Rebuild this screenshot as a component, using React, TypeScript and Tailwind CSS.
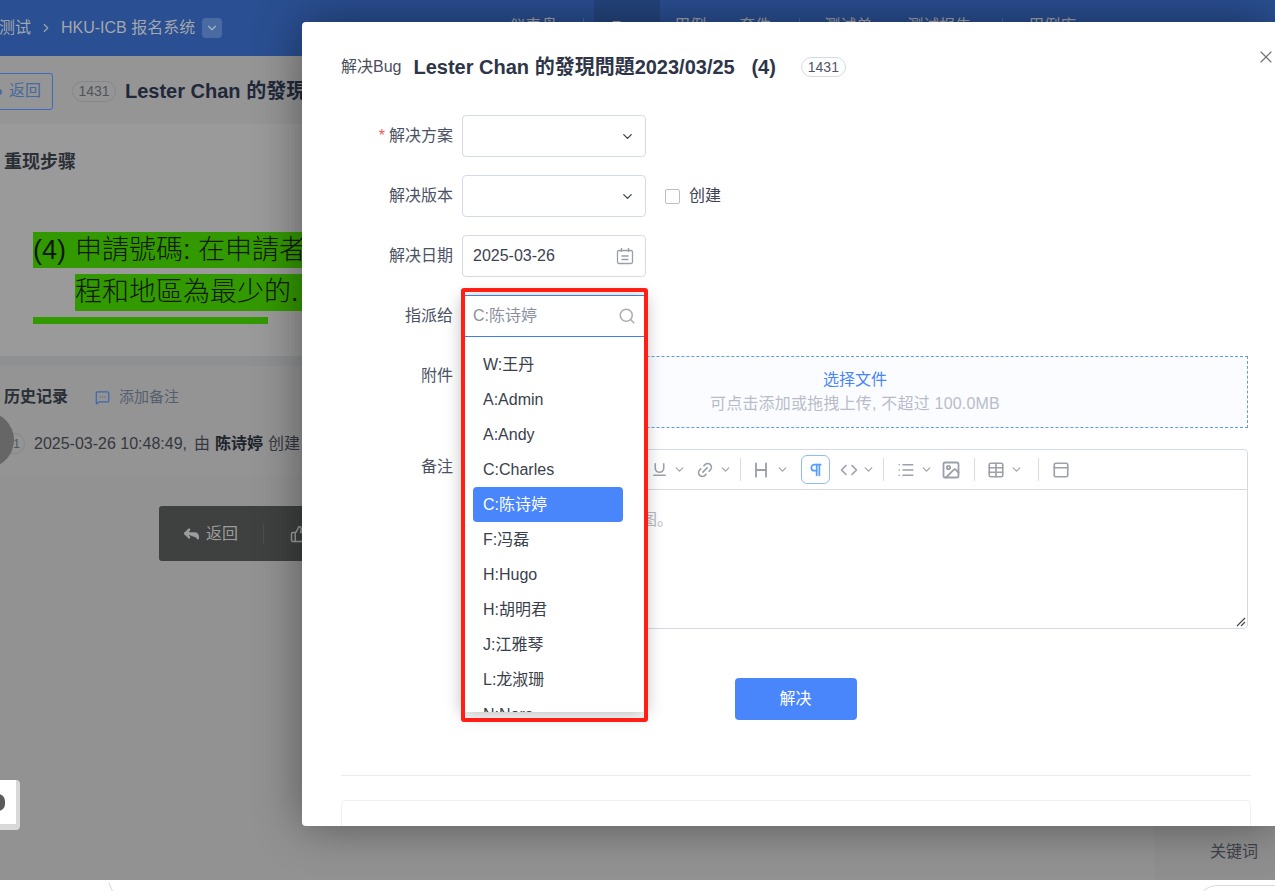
import { ReactNode } from 'react';
import {
  ChevronDown,
  ChevronRight,
  Code,
  Heading,
  Image,
  Link2,
  List,
  MessageSquareMore,
  PanelTop,
  Pilcrow,
  Reply,
  Search,
  Table,
  ThumbsUp,
  Underline,
  X,
} from 'lucide-react';

const users = ['W:王丹', 'A:Admin', 'A:Andy', 'C:Charles', 'C:陈诗婷', 'F:冯磊', 'H:Hugo', 'H:胡明君', 'J:江雅琴', 'L:龙淑珊', 'N:Nora'];

function Field({ label, required, labelClass, children }: { label: string; required?: boolean; labelClass?: string; children: ReactNode }) {
  return (
    <div className="flex">
      <div className={`w-[112px] h-[42px] shrink-0 flex items-center justify-end text-[#4b5263] ${labelClass ?? ''}`}>
        {required && <span className="text-[#f05a5a] mr-[4px]">*</span>}
        {label}
      </div>
      <div className="ml-[9px] flex-1 min-w-0">{children}</div>
    </div>
  );
}

function SelectBox() {
  return (
    <div className="w-[184px] h-[42px] border border-[#d6d9e8] rounded flex items-center justify-end pr-[10px]">
      <ChevronDown size={15} className="text-[#3c4150]" />
    </div>
  );
}

function Chev({ className }: { className: string }) {
  return <ChevronDown size={13} strokeWidth={2.4} className={`text-[#a3a6b0] shrink-0 ${className}`} />;
}

function Sep({ className }: { className: string }) {
  return <div className={`w-px h-[23px] bg-[#dcdde2] shrink-0 ${className}`} />;
}

function Toolbar() {
  const icon = 'text-[#9ca0ab] shrink-0';
  return (
    <div className="h-10 border-b border-[#d8d9e0] flex items-center">
      <Underline size={17} strokeWidth={2.2} className={`${icon} ml-[188px]`} />
      <Chev className="ml-[5px]" />
      <Link2 size={18} strokeWidth={2.2} className={`${icon} ml-[10px] -rotate-45`} />
      <Chev className="ml-[5px]" />
      <Sep className="ml-[8px]" />
      <Heading size={20} strokeWidth={2.2} className={`${icon} ml-[10px]`} />
      <Chev className="ml-[5px]" />
      <div className="ml-[12px] w-[29px] h-[29px] rounded-md border border-[#8fbdfa] flex items-center justify-center shrink-0">
        <Pilcrow size={16} strokeWidth={2.6} className="text-[#5c9dfb]" />
      </div>
      <Code size={18} strokeWidth={2.2} className={`${icon} ml-[10px]`} />
      <Chev className="ml-[4px]" />
      <Sep className="ml-[8px]" />
      <List size={18} strokeWidth={2.2} className={`${icon} ml-[13px]`} />
      <Chev className="ml-[5px]" />
      <Image size={20} strokeWidth={2.2} className={`${icon} ml-[8px]`} />
      <Sep className="ml-[13px]" />
      <Table size={18} strokeWidth={2.2} className={`${icon} ml-[12px]`} />
      <Chev className="ml-[5px]" />
      <Sep className="ml-[15px]" />
      <PanelTop size={18} strokeWidth={2.2} className={`${icon} ml-[13px]`} />
    </div>
  );
}

function AssignDropdown() {
  return (
    <>
      <div className="absolute left-0 top-0 w-[184px] h-[417px] bg-white overflow-hidden shadow-[0_2px_16px_rgba(0,0,0,0.28)] z-10">
        <div className="h-[42px] border-y border-[#3f7de8] flex items-center justify-between pl-[11px] pr-[9px] text-[#8a90a0]">
          <span>C:陈诗婷</span>
          <Search size={18} className="text-[#a9adb5] mr-[1px]" />
        </div>
        <div className="pt-[10px] pl-[11px]">
          {users.map(user => (
            <div
              key={user}
              className={
                user === 'C:陈诗婷'
                  ? 'w-[150px] h-[35px] pl-[10px] flex items-center rounded-sm bg-[#4a86fb] text-white'
                  : 'w-[150px] h-[35px] pl-[10px] flex items-center text-[#3a3f4c]'
              }
            >
              {user}
            </div>
          ))}
        </div>
      </div>
      <div className="absolute -left-[1px] -top-[7px] w-[187px] h-[434px] border-4 border-[#ff1f14] rounded-[3px] z-20 pointer-events-none" />
    </>
  );
}

function ResolveModal() {
  return (
    <div className="absolute left-[302px] top-[22px] w-[973px] h-[804px] bg-white rounded-l-sm overflow-hidden shadow-[0_0_48px_rgba(0,0,0,0.42)] pl-[39px] pr-[24px]">
      <X size={20} strokeWidth={1.4} className="absolute -right-[1px] top-[25px] text-[#6f727a]" />
      <div className="h-[90px] flex items-center">
        <span className="text-[#4a4f5c]">解决Bug</span>
        <span className="ml-[12px] text-[20px] font-bold text-[#2e3548] font-['Liberation_Sans','Noto_Sans_CJK_TC',sans-serif] whitespace-pre">
          Lester Chan 的發現問題2023/03/25{'   '}(4)
        </span>
        <span className="ml-[25px] w-[45px] h-5 rounded-full border border-[#d6d9e8] flex items-center justify-center text-sm text-[#4f566b]">
          1431
        </span>
      </div>

      <div className="mt-[3px] pr-[3px] flex flex-col">
        <Field label="解决方案" required>
          <SelectBox />
        </Field>
        <div className="mt-[18px]">
          <Field label="解决版本">
            <div className="flex items-center">
              <SelectBox />
              <div className="ml-[19px] w-[15px] h-[15px] border border-[#b9bdd0] rounded-[2px]" />
              <span className="ml-[9px] text-[#3d4250]">创建</span>
            </div>
          </Field>
        </div>
        <div className="mt-[18px]">
          <Field label="解决日期">
            <div className="w-[184px] h-[42px] border border-[#d6d9e8] rounded flex items-center justify-between pl-[10px] pr-[11px] text-[#3d4250]">
              2025-03-26
              <svg width="18" height="18" viewBox="0 0 18 18" fill="none" stroke="#9a9ea8" strokeWidth="1.3">
                <rect x="1.5" y="3.5" width="15" height="13" rx="1.5" />
                <path d="M5.5 1v4M12.5 1v4M5.5 9h7M5.5 12.5h7" />
              </svg>
            </div>
          </Field>
        </div>
        <div className="mt-[18px]">
          <Field label="指派给">
            <div className="relative w-[184px] h-[42px]">
              <AssignDropdown />
            </div>
          </Field>
        </div>
        <div className="mt-[19px]">
          <Field label="附件" labelClass="-mt-[1px]">
            <div className="h-[72px] pt-[2px] border border-dashed border-[#5c9dfb] bg-[#fbfcff] flex flex-col items-center justify-center">
              <span className="text-[#4a86fb] leading-[22px]">选择文件</span>
              <span className="text-[#b8bcc8] leading-[26px] tracking-[0.2px]">可点击添加或拖拽上传, 不超过 100.0MB</span>
            </div>
          </Field>
        </div>
        <div className="mt-[21px]">
          <Field label="备注" labelClass="-mt-[3px]">
            <div className="relative h-[180px] border border-[#d6d9e8] rounded-sm">
              <Toolbar />
              <div className="pl-[18px] pt-[18px] text-[#b5b8c0]">您可以在编辑器直接贴图。</div>
              <svg className="absolute right-[1px] bottom-[1px]" width="10" height="10" viewBox="0 0 10 10" stroke="#444" strokeWidth="1.1">
                <path d="M9 1 1 9M9 5 5 9" />
              </svg>
            </div>
          </Field>
        </div>
      </div>

      <div className="mt-[49px] flex justify-center ml-[-1px]">
        <button className="w-[122px] h-[42px] rounded-sm bg-[#4a86fb] text-white">解决</button>
      </div>
      <div className="mt-[55px] border-t border-[#ececf0]" />
      <div className="mt-[24px] h-[60px] border border-[#f0f0f4] rounded" />
    </div>
  );
}

function BackgroundPage() {
  return (
    <div className="h-[880px] flex flex-col bg-[#929292] overflow-hidden">
      <div className="h-14 shrink-0 bg-[#2a4f92] flex items-center text-[#a3a7ae] whitespace-nowrap">
        <span className="-ml-[1px] w-[33px]">测试</span>
        <ChevronRight size={14} className="ml-[7px] text-[#9aa2b4]" />
        <span className="ml-[8px]">HKU-ICB 报名系统</span>
        <div className="ml-[7px] w-5 h-5 rounded-sm bg-[#496aa3] flex items-center justify-center">
          <ChevronDown size={14} className="text-[#a9b2c4]" />
        </div>
        <span className="ml-[287px] -mt-[4px]">仪表盘</span>
        <div className="ml-[26px] w-px h-5 bg-[#4a6aa3]" />
        <div className="ml-[10px] w-[66px] h-14 bg-[#25457f] flex items-center justify-center font-bold">Bug</div>
        <span className="ml-[14px] -mt-[4px]">用例</span>
        <span className="ml-[33px] -mt-[4px]">套件</span>
        <div className="ml-[28px] w-px h-5 bg-[#4a6aa3]" />
        <span className="ml-[24px] -mt-[4px]">测试单</span>
        <span className="ml-[35px] -mt-[4px]">测试报告</span>
        <div className="ml-[31px] w-px h-5 bg-[#4a6aa3]" />
        <span className="ml-[25px] -mt-[4px]">用例库</span>
      </div>

      <div className="h-[68px] shrink-0 bg-[#959595] flex items-center pt-[2px]">
        <div className="-ml-[12px] w-[65px] h-[37px] border border-[#3a6bc0] rounded-[3px] flex items-center justify-end pr-[11px] text-[#46699f]">
          返回
        </div>
        <span className="ml-[19px] w-[44px] h-[21px] rounded-full border border-[#85878d] flex items-center justify-center text-sm text-[#50545d]">
          1431
        </span>
        <span className="ml-[9px] text-[20px] font-bold text-[#20283a] whitespace-nowrap font-['Liberation_Sans','Noto_Sans_CJK_TC',sans-serif]">
          Lester Chan 的發現問題
        </span>
      </div>

      <div className="h-[232px] shrink-0 bg-[#9a9a9a] pl-[4px] pt-[27px] overflow-hidden">
        <div className="text-[18px] font-bold text-[#2a2e35] leading-[22px]">重现步骤</div>
        <div className="mt-[59px] -ml-[4px] pl-[33px] w-[500px] h-[92px] overflow-hidden text-[27px] font-light text-[#10180c] leading-[36px] font-['Liberation_Sans','Noto_Sans_CJK_TC',sans-serif]">
          <div className="h-[36px] bg-[#339900] whitespace-nowrap">
            (4)<span className="ml-[9px]">申請號碼: 在申請者</span>
          </div>
          <div className="mt-[6px] ml-[42px] h-[37px] bg-[#339900] whitespace-nowrap">程和地區為最少的.</div>
          <div className="mt-[6px] w-[235px] h-[36px] bg-[#339900]" />
        </div>
      </div>

      <div className="h-[10px] shrink-0 bg-[#8e9091]" />

      <div className="h-[110px] shrink-0 bg-[#949494] pl-[4px] pt-[20px]">
        <div className="flex items-center">
          <span className="font-bold text-[#2a2e35] leading-[22px]">历史记录</span>
          <MessageSquareMore size={15} className="ml-[27px] text-[#3d66ac]" />
          <span className="ml-[9px] text-[15px] text-[#555e6e]">添加备注</span>
        </div>
        <div className="mt-[23px] flex items-center whitespace-nowrap text-[#34383f]">
          <span className="w-[21px] h-[21px] rounded-full border border-[#85878d] flex items-center justify-end pr-[4px] text-xs text-[#50545d]">1</span>
          <span className="ml-[9px]">2025-03-26 10:48:49,</span>
          <span className="ml-[7px]">由</span>
          <b className="ml-[5px] text-[#20242c]">陈诗婷</b>
          <span className="ml-[5px]">创建</span>
        </div>
      </div>

      <div className="flex-1 flex">
        <div className="flex-1 pt-[30px] pl-[159px]">
          <div className="w-[300px] h-[55px] rounded-[3px] bg-[#3f4040] flex items-center text-[#9c9d9d]">
            <Reply size={19} strokeWidth={3} fill="currentColor" className="ml-[23px]" />
            <span className="ml-[5px]">返回</span>
            <div className="ml-[25px] w-px h-5 bg-[#4c4d4d]" />
            <ThumbsUp size={18} className="ml-[26px]" />
          </div>
        </div>
        <div className="w-[121px] flex flex-col justify-end items-end bg-[#8f8f8f] pb-[16px] pr-[17px] text-[#3f434c]">
          关键词
        </div>
      </div>
    </div>
  );
}

export default function App() {
  return (
    <div className="relative w-[1275px] h-[891px] overflow-hidden bg-white text-base font-['Liberation_Sans','Noto_Sans_CJK_SC',sans-serif]">
      <BackgroundPage />

      {/* things floating at the left edge of the page */}
      <div className="absolute -left-[4px] top-[89px] w-[6px] h-[6px] rounded-full bg-[#46699f]" />
      <div className="absolute -left-[42px] top-[412px] w-14 h-14 rounded-full bg-[#666666]" />
      <div className="absolute -left-[20px] top-[780px] w-10 h-[50px] rounded-[4px] bg-white border-b-[6px] border-r-[4px] border-[#d8d8d8] flex items-center justify-end pr-[11px]">
        <div className="w-[14px] h-[17px] rounded-full bg-[#5a5a5a]" />
      </div>

      <ResolveModal />

      {/* bits of the window below the page */}
      <div className="absolute left-[110px] top-[882px] w-[3px] h-[9px] border-l border-[#d8d8dc] -rotate-[24deg]" />
      <div className="absolute left-[1197px] top-[885px] w-[100px] h-10 rounded-[20px] border border-[#d6d9e8]" />
    </div>
  );
}
